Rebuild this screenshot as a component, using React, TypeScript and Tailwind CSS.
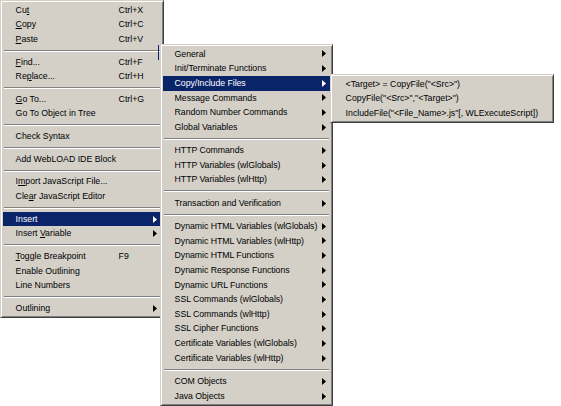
import React from "react";

type Item =
  | "sep"
  | {
      label: React.ReactNode;
      shortcut?: string;
      arrow?: boolean;
      active?: boolean;
    };

function Arrow({ white }: { white?: boolean }) {
  return (
    <svg width="4" height="7" viewBox="0 0 4 7" className="block shrink-0">
      <polygon points="0,0 4,3.5 0,7" className={white ? "fill-white" : "fill-black"} />
    </svg>
  );
}

function Menu({
  items,
  className,
  labelClass,
  padLeft,
  sepClass,
}: {
  items: Item[];
  className: string;
  labelClass: string;
  padLeft: string;
  sepClass: string;
}) {
  return (
    <div
      className={`absolute bg-[#d4d0c8] border border-t-[#d4d0c8] border-l-[#d4d0c8] border-r-[#404040] border-b-[#404040] shadow-[inset_1px_1px_0_#ffffff,inset_-1px_-1px_0_#808080] p-[1.6px] ${className}`}
    >
      {items.map((it, i) =>
        it === "sep" ? (
          <div key={i} className={`${sepClass} flex flex-col justify-center px-[1px]`}>
            <div className="h-[1px] bg-[#808080]" />
            <div className="h-[1px] bg-white" />
          </div>
        ) : (
          <div
            key={i}
            className={`flex items-center h-[14.67px] ${padLeft} pr-[4px] leading-none whitespace-nowrap ${
              it.active ? "bg-[#0a246a] text-white" : "text-black"
            }`}
          >
            <span className={labelClass}>{it.label}</span>
            <span className="flex-1">{it.shortcut ?? ""}</span>
            {it.arrow ? <Arrow white={it.active} /> : null}
          </div>
        )
      )}
    </div>
  );
}

const U = ({ children }: { children: React.ReactNode }) => (
  <u className="underline decoration-1 underline-offset-[1px]">{children}</u>
);

const menu1: Item[] = [
  { label: <>Cu<U>t</U></>, shortcut: "Ctrl+X" },
  { label: <><U>C</U>opy</>, shortcut: "Ctrl+C" },
  { label: <><U>P</U>aste</>, shortcut: "Ctrl+V" },
  "sep",
  { label: <><U>F</U>ind...</>, shortcut: "Ctrl+F" },
  { label: <>Re<U>p</U>lace...</>, shortcut: "Ctrl+H" },
  "sep",
  { label: <><U>G</U>o To...</>, shortcut: "Ctrl+G" },
  { label: "Go To Object in Tree" },
  "sep",
  { label: "Check Syntax" },
  "sep",
  { label: "Add WebLOAD IDE Block" },
  "sep",
  { label: <>I<U>m</U>port JavaScript File...</> },
  { label: <>Cle<U>a</U>r JavaScript Editor</> },
  "sep",
  { label: "Insert", arrow: true, active: true },
  { label: <>Insert <U>V</U>ariable</>, arrow: true },
  "sep",
  { label: <><U>T</U>oggle Breakpoint</>, shortcut: "F9" },
  { label: "Enable Outlining" },
  { label: "Line Numbers" },
  "sep",
  { label: "Outlining", arrow: true },
];

const menu2: Item[] = [
  { label: "General", arrow: true },
  { label: "Init/Terminate Functions", arrow: true },
  { label: "Copy/Include Files", arrow: true, active: true },
  { label: "Message Commands", arrow: true },
  { label: "Random Number Commands", arrow: true },
  { label: "Global Variables", arrow: true },
  "sep",
  { label: "HTTP Commands", arrow: true },
  { label: "HTTP Variables (wlGlobals)", arrow: true },
  { label: "HTTP Variables (wlHttp)", arrow: true },
  "sep",
  { label: "Transaction and Verification", arrow: true },
  "sep",
  { label: "Dynamic HTML Variables (wlGlobals)", arrow: true },
  { label: "Dynamic HTML Variables (wlHttp)", arrow: true },
  { label: "Dynamic HTML Functions", arrow: true },
  { label: "Dynamic Response Functions", arrow: true },
  { label: "Dynamic URL Functions", arrow: true },
  { label: "SSL Commands (wlGlobals)", arrow: true },
  { label: "SSL Commands (wlHttp)", arrow: true },
  { label: "SSL Cipher Functions", arrow: true },
  { label: "Certificate Variables (wlGlobals)", arrow: true },
  { label: "Certificate Variables (wlHttp)", arrow: true },
  "sep",
  { label: "COM Objects", arrow: true },
  { label: "Java Objects", arrow: true },
];

const menu3: Item[] = [
  { label: '<Target> = CopyFile("<Src>")' },
  { label: 'CopyFile("<Src>","<Target>")' },
  { label: 'IncludeFile("<File_Name>.js"[, WLExecuteScript])' },
];

export default function App() {
  return (
    <div className="relative w-[561px] h-[406px] overflow-hidden bg-white font-['Liberation_Sans',Arial,sans-serif] text-[8.75px]">
      <Menu
        items={menu1}
        className="left-0 top-0 w-[164px]"
        labelClass="w-[103px] shrink-0"
        padLeft="pl-[13px]"
        sepClass="h-[8px]"
      />
      <div className="absolute left-[158px] top-[45px] w-[1px] h-[15px] bg-[#0a246a]" />
      <Menu
        items={menu2}
        className="left-[160px] top-[44px] w-[173px]"
        labelClass="shrink-0 tracking-[-0.05px]"
        padLeft="pl-[12px]"
        sepClass="h-[8.6px]"
      />
      <Menu
        items={menu3}
        className="left-[330px] top-[74px] w-[224px]"
        labelClass="shrink-0"
        padLeft="pl-[13px]"
        sepClass="h-[8px]"
      />
    </div>
  );
}
